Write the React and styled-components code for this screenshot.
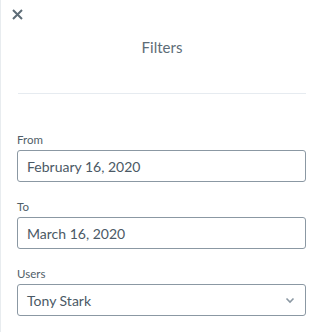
import React from "react";
import styled, { createGlobalStyle } from "styled-components";

const Global = createGlobalStyle`
  html, body {
    margin: 0;
    padding: 0;
    background: #fff;
  }
  body {
    font-family: Lato, "Liberation Sans", sans-serif;
  }
`;

const Panel = styled.div`
  width: 321px;
  height: 332px;
  box-sizing: border-box;
  border-left: 1px solid #e8ecef;
  padding: 0 15px 0 16px;
  background: #fff;
  position: relative;
`;

const Close = styled.button`
  position: absolute;
  top: 7px;
  left: 9px;
  border: 0;
  background: none;
  padding: 0;
  width: 14px;
  height: 14px;
  display: flex;
  align-items: center;
  justify-content: center;
  cursor: pointer;
`;

const Header = styled.div`
  height: 94px;
  display: flex;
  justify-content: center;
  padding-top: 38px;
  box-sizing: border-box;
  border-bottom: 1px solid #e6ebf0;
  margin: 0 0 0 1px;
`;

const Title = styled.h2`
  margin: 0;
  font-size: 15px;
  font-weight: 400;
  color: #5d6c77;
  line-height: 18px;
`;

const Form = styled.div`
  display: flex;
  flex-direction: column;
  gap: 18px;
  padding-top: 39px;
`;

const Field = styled.label`
  display: flex;
  flex-direction: column;
  gap: 3px;
`;

const Label = styled.span`
  font-size: 11.5px;
  color: #505e68;
  line-height: 14px;
`;

const Box = styled.div`
  height: 32px;
  box-sizing: border-box;
  border: 1px solid #8b98a3;
  border-radius: 3px;
  display: flex;
  align-items: center;
  justify-content: space-between;
  padding: 0 10px 0 9px;
  font-size: 14px;
  color: #4b5965;
`;

const Chevron = () => (
  <svg width="10" height="7" viewBox="0 0 10 7">
    <path d="M1.5 1.5 L5 5 L8.5 1.5" fill="none" stroke="#8b98a3" strokeWidth="1.6" />
  </svg>
);

export default function App() {
  return (
    <>
      <Global />
      <Panel>
        <Close aria-label="Close">
          <svg width="11" height="11" viewBox="0 0 11 11">
            <path d="M1 1 L10 10 M10 1 L1 10" stroke="#5d6c77" strokeWidth="2" />
          </svg>
        </Close>
        <Header>
          <Title>Filters</Title>
        </Header>
        <Form>
          <Field>
            <Label>From</Label>
            <Box>February 16, 2020</Box>
          </Field>
          <Field>
            <Label>To</Label>
            <Box>March 16, 2020</Box>
          </Field>
          <Field>
            <Label>Users</Label>
            <Box>
              Tony Stark
              <Chevron />
            </Box>
          </Field>
        </Form>
      </Panel>
    </>
  );
}
